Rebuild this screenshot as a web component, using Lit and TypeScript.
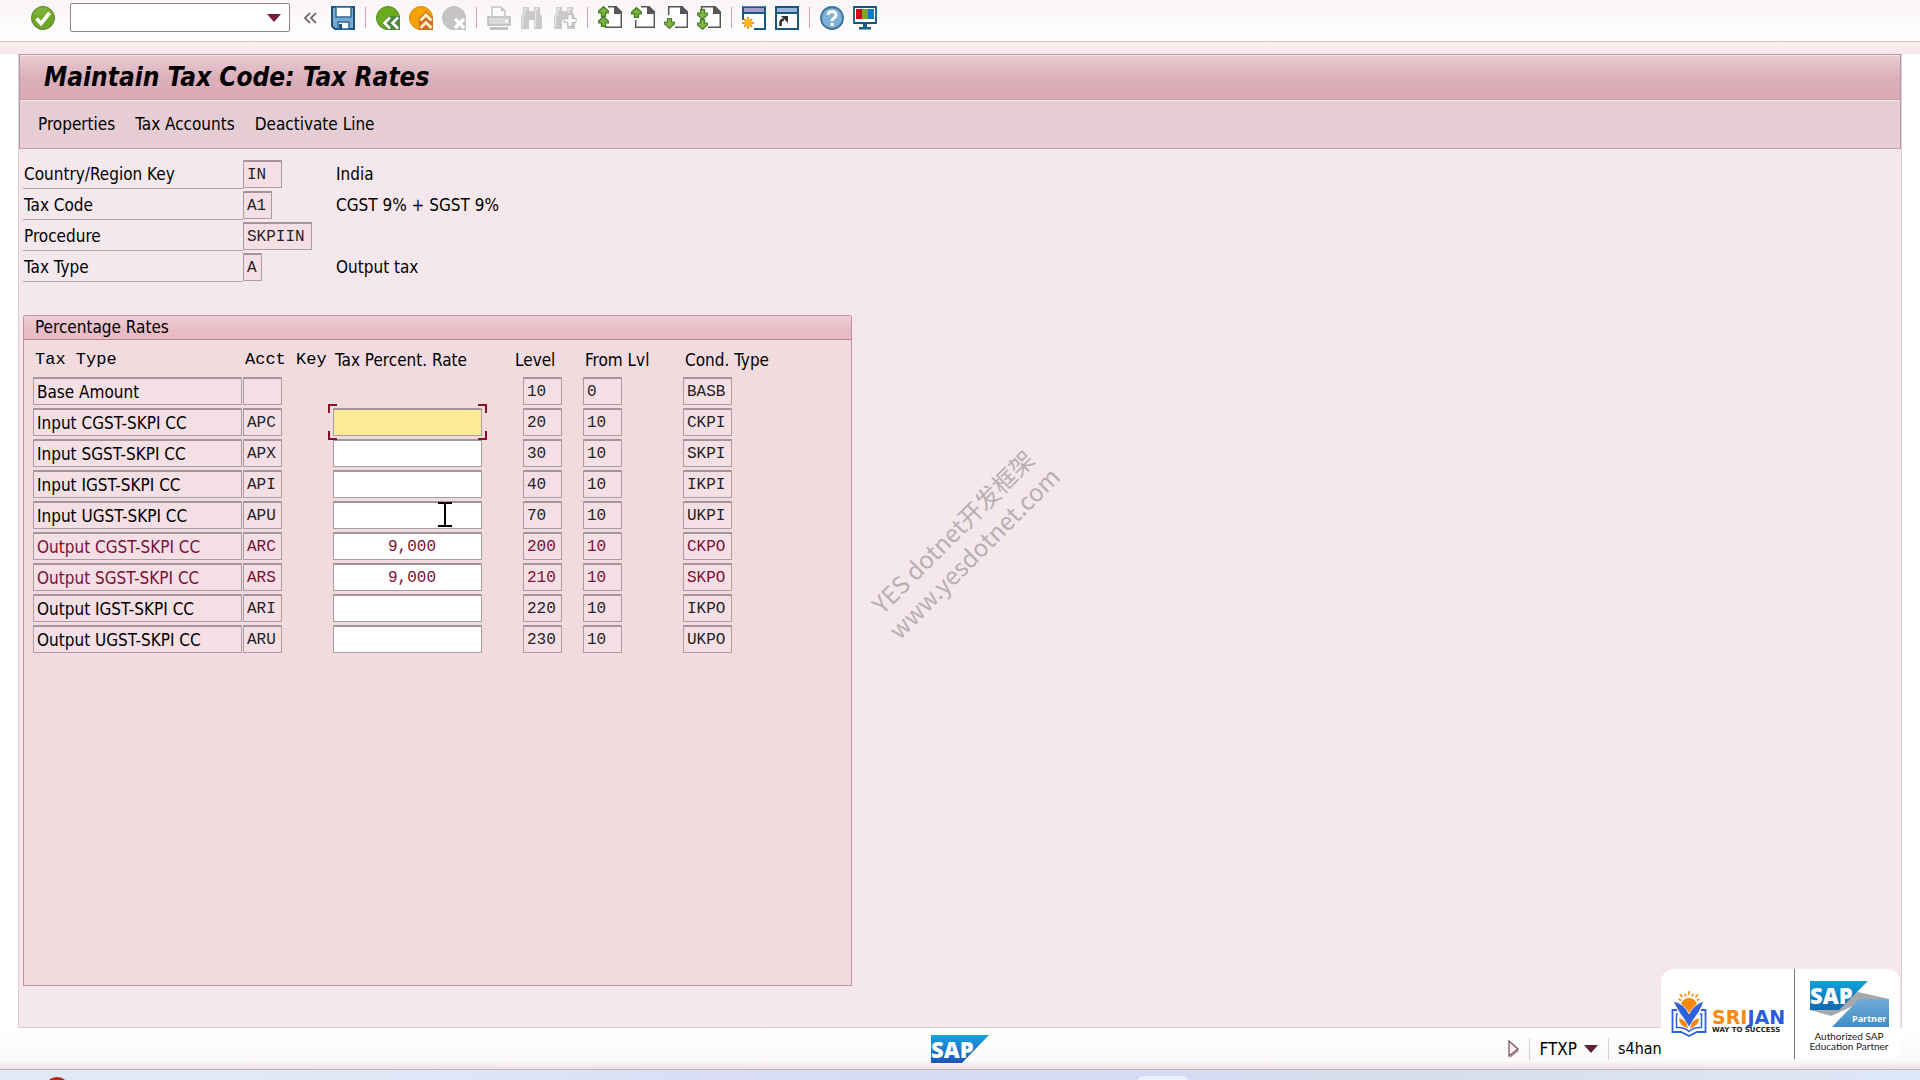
import { LitElement, html, css, svg, nothing } from "lit";
import { customElement, property } from "lit/decorators.js";
import { classMap } from "lit/directives/class-map.js";

interface RateRow {
  type: string;
  key: string;
  rate: string | null;
  level: string;
  from: string;
  cond: string;
  active?: boolean;
  focused?: boolean;
}

const RATES: RateRow[] = [
  { type: "Base Amount", key: "", rate: null, level: "10", from: "0", cond: "BASB" },
  { type: "Input CGST-SKPI CC", key: "APC", rate: "", level: "20", from: "10", cond: "CKPI", focused: true },
  { type: "Input SGST-SKPI CC", key: "APX", rate: "", level: "30", from: "10", cond: "SKPI" },
  { type: "Input IGST-SKPI CC", key: "API", rate: "", level: "40", from: "10", cond: "IKPI" },
  { type: "Input UGST-SKPI CC", key: "APU", rate: "", level: "70", from: "10", cond: "UKPI" },
  { type: "Output CGST-SKPI CC", key: "ARC", rate: "9,000", level: "200", from: "10", cond: "CKPO", active: true },
  { type: "Output SGST-SKPI CC", key: "ARS", rate: "9,000", level: "210", from: "10", cond: "SKPO", active: true },
  { type: "Output IGST-SKPI CC", key: "ARI", rate: "", level: "220", from: "10", cond: "IKPO" },
  { type: "Output UGST-SKPI CC", key: "ARU", rate: "", level: "230", from: "10", cond: "UKPO" },
];

const FIELDS = [
  { id: "country", label: "Country/Region Key", value: "IN", size: "w39", text: "India" },
  { id: "code", label: "Tax Code", value: "A1", size: "w29", text: "CGST 9% + SGST 9%" },
  { id: "procedure", label: "Procedure", value: "SKPIIN", size: "w69", text: "" },
  { id: "type", label: "Tax Type", value: "A", size: "w19", text: "Output tax" },
];

const page = svg`<path d="M9 1H18L23 6V22H5" fill="#fff" stroke="none"/><path d="M16 0H18L24 6V8H16Z" fill="#55565a"/>`;
const up = (x: number, y: number) =>
  svg`<path transform="translate(${x} ${y})" d="M5.500 .7L10.300 5V6.800H7.500V10.300H3.500V6.800H.7V5Z" fill="#7fb23c" stroke="#3f7d22" stroke-width="1.300"/>`;
const down = (x: number, y: number) =>
  svg`<path transform="translate(${x} ${y})" d="M5.500 10.300L10.300 6V4.200H7.500V.7H3.500V4.200H.7V6Z" fill="#86b545" stroke="#4c8128" stroke-width="1.300"/>`;
const tube = svg`<path d="M3 1H9V5H14V1H20V7L22 11V23H14V14H9V23H1V11L3 7Z" fill="#c9c9c9"/><path d="M4.500 2.500V8L2.500 11.500V21.500M15.500 2.500V8L15.500 21.500" stroke="#e4e4e4" fill="none" stroke-width="1.500"/><path d="M6 1.500V4M17 1.500V4" stroke="#fff"/>`;

const ICONS: Record<string, unknown> = {
  ok: svg`<circle cx="12" cy="12" r="11.500" fill="#6fa52b" stroke="#62802f"/><path d="M2 8A11 11 0 0 1 22 8Q14 12 2 8Z" fill="#86b93a" opacity=".6"/><path d="M5.500 12.500L10 17.500L18.500 7" fill="none" stroke="#fff" stroke-width="3.600"/>`,
  save: svg`<path d="M1 1H23V23H4L1 20Z" fill="#7aaad2" stroke="#1f5078" stroke-width="2"/><path d="M5 1H20V11H5Z" fill="#fff" stroke="#2d6a94" stroke-width="1.500"/><path d="M7 16H18V23H7Z" fill="#fff" stroke="#2d6a94" stroke-width="1.500"/><path d="M8 18H11V23H8Z" fill="#1f5078"/>`,
  back: svg`<circle cx="12" cy="12" r="11.500" fill="#6cab1e" stroke="#4f8a2a"/><path d="M6 17L13 10H24V24H12Z" fill="#4d8740"/><path d="M14 11.500L8.500 17L14 22.500M22 11.500L16.500 17L22 22.500" fill="none" stroke="#fff" stroke-width="2.600"/>`,
  exit: svg`<circle cx="12" cy="12" r="11.500" fill="#f5a300" stroke="#dc8414"/><path d="M10 12L17 5.500L24 12V24H10Z" fill="#cf6f1e"/><path d="M11.500 14.500L17 9L22.500 14.500M11.500 22L17 16.500L22.500 22" fill="none" stroke="#fff3cf" stroke-width="2.800"/>`,
  cancel: svg`<circle cx="12" cy="12" r="11.500" fill="#c4c4c4" stroke="#b9b9b9" stroke-dasharray="2 1"/><path d="M11 11H24V24H11Z" fill="#c4c4c4"/><path d="M13 13L22 22M22 13L13 22" stroke="#fff" stroke-width="3.400"/>`,
  print: svg`<path d="M5 10V1H14L18 5V10" fill="#fafafa" stroke="#c4c4c4" stroke-width="1.500"/><path d="M14 1V5H18Z" fill="#c4c4c4"/><rect x="1" y="11" width="22" height="8" fill="#dadada" stroke="#bababa" stroke-width="1.500"/><rect x="18" y="14" width="3" height="2" fill="#fff"/><path d="M3 22.500H21" stroke="#b9b9b9" stroke-width="2.500"/>`,
  find: tube,
  findNext: svg`${tube}<path d="M15 8.500H19V12.500H23V16.500H19V20.500H15V16.500H11V12.500H15Z" fill="#fff" stroke="#b8b8b8"/>`,
  first: svg`${page}<path d="M10 .7H18L23.300 6V21.300H7" fill="none" stroke="#55565a" stroke-width="1.500"/>${up(0, 0)}${up(0, 10)}`,
  prev: svg`${page}<path d="M10 .7H18L23.300 6V21.300H4.700V14" fill="none" stroke="#55565a" stroke-width="1.500"/>${up(0, 1)}`,
  next: svg`${page}<path d="M4.700 9V.7H18L23.300 6V21.300H11" fill="none" stroke="#55565a" stroke-width="1.500"/>${down(0, 12)}`,
  last: svg`${page}<path d="M4.700 5V.7H18L23.300 6V21.300H11" fill="none" stroke="#55565a" stroke-width="1.500"/>${down(0, 3)}${down(0, 13)}`,
  session: svg`<path d="M1 1H23V23H1Z" fill="#fff"/><path d="M1 0H24V6H1Z" fill="#a79ccb"/><path d="M0 0H24V24H12V22H22V8H2V14H0Z M2 2V6H22V2Z" fill="#175a80" fill-rule="evenodd"/><path d="M1 0H23V1H1Z" fill="#5b86b0"/><g stroke="#f39a1c" stroke-width="2"><path d="M6 11V23M0 17H12M2 13L10 21M10 13L2 21"/></g><circle cx="6" cy="17" r="3.600" fill="#fdb515"/>`,
  shortcut: svg`<path d="M1 1H23V23H1Z" fill="#fff" stroke="#1d5678" stroke-width="2"/><path d="M2 2H22V6H2Z" fill="#9ab3dc"/><path d="M1 7H23" stroke="#1d5678" stroke-width="2"/><path d="M5.500 20V17Q5.500 13.500 9 13.500" stroke="#333" stroke-width="2.600" fill="none"/><path d="M6 10H13V17Z" fill="#333"/>`,
  help: svg`<circle cx="12" cy="12" r="11" fill="#7db1d8" stroke="#3f7498" stroke-width="1.800"/><path d="M8 9Q8.200 5.500 12 5.500T16 9Q16 11 13.800 12.200Q12 13.200 12 15.200" fill="none" stroke="#fff" stroke-width="3"/><path d="M10.500 17H13.700V20H10.500Z" fill="#fff"/>`,
  monitor: svg`<path d="M1 1H23V17H1Z" fill="#fff" stroke="#155678" stroke-width="1.800"/><path d="M3 3H9V13H3Z" fill="#c80f14"/><path d="M9 3H15V13H9Z" fill="#7aa926"/><path d="M15 3H21V13H15Z" fill="#0a7cc9"/><path d="M10 17H14V21H18V23.500H6V21H10Z" fill="#1a6288"/>`,
};

@customElement("tool-button")
export class ToolButton extends LitElement {
  @property() icon = "";
  @property() label = "";
  @property({ type: Boolean }) disabled = false;

  static styles = css`
    :host { display: block; flex: none; }
    .tool { display: block; width: 24px; height: 24px; margin: 0; padding: 0; border: 0; background: none; }
    .pic { display: block; width: 24px; height: 24px; }
  `;

  render() {
    return html`<button class="tool" aria-label=${this.label} ?disabled=${this.disabled}>
      <svg class="pic" viewBox="0 0 24 24" aria-hidden="true">${ICONS[this.icon]}</svg>
    </button>`;
  }
}

@customElement("partner-card")
export class PartnerCard extends LitElement {
  static styles = css`
    :host { display: block; }
    .card { display: flex; width: 239px; height: 90px; border-radius: 13px; background: #fff; overflow: hidden; }
    .brand { flex: none; width: 133px; border-right: 1px solid #777; }
    .partner { flex: 1; }
    svg { display: block; }
    .name { font: 700 19px "DejaVu Sans", sans-serif; }
    .motto { font: 700 7px "DejaVu Sans", sans-serif; fill: #222; }
    .sap { font: 800 22px "Open Sans", sans-serif; fill: #fff; }
    .tag { font: 700 9px "Open Sans", sans-serif; fill: #fff; }
    .note { font: 400 10px Lato, sans-serif; fill: #222; }
  `;

  render() {
    const rays = [-80, -60, -40, -20, 0, 20, 40, 60, 80];
    return html`<div class="card">
      <div class="brand">
        <svg width="132" height="90" viewBox="0 0 132 90" role="img" aria-label="Srijan, way to success">
          <g stroke="#f28a12" stroke-width="1.600">
            ${rays.map((a) => svg`<path d="M28 ${a % 40 ? 27 : 26}V${a % 40 ? 24 : 22}" transform="rotate(${a} 28 36)"/>`)}
          </g>
          <circle cx="28" cy="37" r="8" fill="#f7890b"/>
          <path d="M12 32Q24 35 28 45Q32 36 43 32Q39 43 33 50L28 58L23 50Q18 44 12 32Z" fill="#2f62d9" stroke="#fff" stroke-width=".8"/>
          <path d="M16 41H11.500V63H20L28 67L36 63H44.500V41H40" fill="none" stroke="#2f62d9" stroke-width="1.800"/>
          <path d="M17 45H15.500V58.500Q24 58 28 62.500Q32 58 40.500 58.500V45H39" fill="none" stroke="#2f62d9" stroke-width="1.500"/>
          <path d="M27 59Q18 57 18 49Q26 51 27 59ZM29 59Q38 57 38 49Q30 51 29 59Z" fill="#f28a12"/>
          <text class="name" x="51" y="55"><tspan fill="#f28a12">SRI</tspan><tspan fill="#2a5bdb">JAN</tspan></text>
          <text class="motto" x="51" y="63">WAY TO SUCCESS</text>
        </svg>
      </div>
      <div class="partner">
        <svg width="105" height="90" viewBox="0 0 105 90" role="img" aria-label="SAP Partner">
          <defs>
            <linearGradient id="a" x1="0" y1="0" x2="0" y2="1"><stop offset="0" stop-color="#12a0dc"/><stop offset="1" stop-color="#1268ae"/></linearGradient>
            <linearGradient id="b" x1="0" y1="0" x2="0" y2="1"><stop offset="0" stop-color="#74a9d8"/><stop offset="1" stop-color="#3d8fc2"/></linearGradient>
          </defs>
          <path d="M63 23L94 30L60 36L36 47L15 41Z" fill="#a6a8ab"/>
          <path d="M15 12H73L44 41H15Z" fill="url(#a)"/>
          <path d="M64 30H94V58H37Z" fill="url(#b)"/>
          <text class="sap" x="15" y="35">SAP</text>
          <text class="tag" x="57" y="53">Partner</text>
          <text class="note" x="54" y="71" text-anchor="middle">Authorized SAP</text>
          <text class="note" x="54" y="81" text-anchor="middle">Education Partner</text>
        </svg>
      </div>
    </div>`;
  }
}

@customElement("app-root")
export class AppRoot extends LitElement {
  static styles = css`
    :host {
      --ui: "DejaVu Sans Condensed", "Noto Sans", sans-serif;
      display: flex;
      flex-direction: column;
      position: relative;
      min-height: 100vh;
      overflow: hidden;
      box-sizing: border-box;
      background: #fff;
      color: #000;
      font: 17px/28px var(--ui);
    }
    * { box-sizing: border-box; }
    button, input { font: inherit; color: inherit; margin: 0; }

    .bar { display: flex; align-items: center; gap: 9px; height: 42px; padding: 0 31px 6px; border-bottom: 1px solid #cdc3c6; background: linear-gradient(#faf5f6, #fff); }
    .command { display: flex; align-items: center; width: 220px; height: 29px; margin: 0 4px 0 6px; border: 1px solid #8d8286; border-radius: 2px; background: #fff; }
    .command input { flex: 1; min-width: 0; height: 100%; padding: 0 4px; border: 0; outline: 0; background: none; }
    .command button, .fold { padding: 0; border: 0; background: none; }
    .command svg { display: block; width: 14px; height: 8px; margin-right: 8px; }
    .fold { width: 14px; height: 14px; margin-right: 5px; }
    .fold svg { display: block; }
    .sep { flex: none; width: 1px; height: 21px; margin: 0 1px; background: #d9a4b0; }

    .stage { flex: 1; display: flex; flex-direction: column; padding: 12px 18px 0; background: linear-gradient(#faf0f0, #f6e6e9 12px, #fff 12px, #fff); }
    .window { flex: 1; display: flex; flex-direction: column; border: 1px solid #dccdd2; border-top: 0; background: #f4e8ec; }
    .head { border: 1px solid #b59ba4; border-bottom-color: #bba7ae; background: #e5cdd3; }
    .title { margin: 0; padding: 0 24px; height: 45px; border-top: 1px solid #f3e2e6; border-bottom: 1px solid #c49aa5; background: linear-gradient(#e9ccd3, #dbb0bb 50%, #daa9b4); font: italic 700 26px/42px var(--ui); }
    .actions { display: flex; gap: 20px; padding: 9px 18px 10px; border-top: 1px solid #f6eaed; }
    .actions button { padding: 0; border: 0; background: none; }

    .fields { display: grid; gap: 3px; padding: 11px 4px 0; }
    .field { display: grid; grid-template-columns: 220px 93px 1fr; height: 28px; }
    .field label { padding-left: 1px; border-bottom: 1px solid #b3a5aa; }

    .box { display: block; height: 28px; padding: 0 3px; border: 1px solid #a89da1; border-top: 2px solid #a39599; border-radius: 1px; outline: 0; background: #f4dfe5; color: #262226; font: 16px/25px "Liberation Mono", monospace; }
    .plain { color: #000; font: 17px/25px var(--ui); }
    .w19 { width: 19px; }
    .w29 { width: 29px; }
    .w39 { width: 39px; }
    .w49 { width: 49px; }
    .w69 { width: 69px; }
    .w209 { width: 209px; }
    .rate { width: 149px; padding-right: 45px; background: #fff; text-align: right; }
    .rate.focused { background: #fbea98; }
    .active .box { color: #7a0f38; }

    .group { flex: 1; display: flex; flex-direction: column; width: 44%; min-width: 829px; margin: 34px 4px 41px; border: 1px solid #c4919c; border-bottom-color: #b49aa1; border-radius: 3px 3px 0 0; background: #f1dbdf; }
    .caption { margin: 0; padding-left: 11px; height: 24px; border-bottom: 1px solid #b97f8b; background: linear-gradient(#ecd0d7, #e8bcc7 60%); font: 17px/23px var(--ui); }
    .rates { width: 820px; margin-left: 9px; border-collapse: collapse; table-layout: fixed; }
    .rates th { height: 37px; padding: 2px 0 0 2px; font-weight: 400; text-align: left; white-space: nowrap; }
    .rates th.mono { font: 17px/28px "Liberation Mono", monospace; }
    .rates td { height: 31px; padding: 0 0 3px; }
    .c1 { width: 210px; }
    .c2 { width: 90px; }
    .c3 { width: 180px; }
    .c4 { width: 70px; }
    .c5 { width: 100px; }
    .rates td.inset { padding-left: 10px; }
    .slot { position: relative; width: 149px; }
    .marker { position: absolute; top: -4px; left: -5px; width: 159px; height: 36px; pointer-events: none; z-index: 1; }

    .status { display: grid; grid-template-columns: minmax(0, 1fr) 58px minmax(0, 1fr); align-items: center; height: 42px; border-bottom: 1px solid #c6b3ba; background: linear-gradient(#fff, #fbf9fb 80%, #eee0e5); }
    .logo { display: block; grid-column: 2; }
    .logo text { font: 800 22px "Open Sans", sans-serif; fill: #fff; }
    .info { display: flex; align-items: center; justify-content: flex-end; gap: 9px; padding-right: 259px; }
    .info svg { flex: none; display: block; }
    .info i { flex: none; width: 1px; height: 22px; background: #d8cdd1; }
    .tcode { display: flex; align-items: center; gap: 7px; padding: 0 1px 0 0; border: 0; background: none; line-height: 28px; }
    .host { width: 43px; font-size: 16px; white-space: nowrap; }
    .taskbar { height: 10px; background: linear-gradient(90deg, #e0eaf6, #e0e8f8 20%, #d9dcf5 40%, #d6daf4 62%, #d6dde8 72%, #dde8f8); overflow: hidden; }
    .taskbar svg { display: block; width: 100%; height: 10px; }

    .badge { position: absolute; right: 20px; bottom: 21px; }
    .mark { position: absolute; left: 963px; top: 542px; transform: translate(-50%, -50%) rotate(-45deg); color: #b9afb2; font: 24px/30px "Noto Sans CJK SC", sans-serif; text-align: center; white-space: nowrap; pointer-events: none; }
    .cursor { position: absolute; left: 438px; top: 502px; }
  `;

  private cell(label: string, value: string, cls: string) {
    return html`<input class="box ${cls}" readonly aria-label=${label} .value=${value} />`;
  }

  private rateCell(row: RateRow) {
    if (row.rate === null) return nothing;
    return html`<div class="slot">
      <input class=${classMap({ box: true, rate: true, focused: !!row.focused })} aria-label="Tax Percent. Rate ${row.type}" .value=${row.rate} />
      ${row.focused
        ? html`<svg class="marker" viewBox="0 0 159 36" aria-hidden="true">
            <path d="M1 9V1H9M150 1H158V9M158 27V35H150M9 35H1V27" fill="none" stroke="#8c0d26" stroke-width="2" />
          </svg>`
        : nothing}
    </div>`;
  }

  private tools(items: [string, string, boolean?][]) {
    return items.map(
      ([icon, label, off]) => html`<tool-button icon=${icon} label=${label} ?disabled=${!!off}></tool-button>`
    );
  }

  render() {
    const sep = html`<span class="sep"></span>`;
    return html`
      <header class="bar">
        ${this.tools([["ok", "Enter"]])}
        <div class="command">
          <input aria-label="Command" />
          <button aria-label="Command history">
            <svg viewBox="0 0 14 8" aria-hidden="true"><path d="M0 0H14L7 8Z" fill="#7b1d36" /></svg>
          </button>
        </div>
        <button class="fold" aria-label="Hide command field">
          <svg width="14" height="14" viewBox="0 0 14 14" aria-hidden="true"><path d="M7 2L2 7L7 12M13 2L8 7L13 12" fill="none" stroke="#5a5356" stroke-width="1.600" /></svg>
        </button>
        ${this.tools([["save", "Save"]])} ${sep}
        ${this.tools([["back", "Back"], ["exit", "Exit"], ["cancel", "Cancel", true]])} ${sep}
        ${this.tools([["print", "Print", true], ["find", "Find", true], ["findNext", "Find next", true]])} ${sep}
        ${this.tools([["first", "First page"], ["prev", "Previous page"], ["next", "Next page"], ["last", "Last page"]])} ${sep}
        ${this.tools([["session", "New session"], ["shortcut", "Create shortcut"]])} ${sep}
        ${this.tools([["help", "Help"], ["monitor", "Customize local layout"]])}
      </header>

      <main class="stage">
        <div class="window">
          <div class="head">
            <h1 class="title">Maintain Tax Code: Tax Rates</h1>
            <nav class="actions">
              <button>Properties</button>
              <button>Tax Accounts</button>
              <button>Deactivate Line</button>
            </nav>
          </div>

          <div class="fields">
            ${FIELDS.map(
              (f) => html`<div class="field">
                <label for=${f.id}>${f.label}</label>
                <input id=${f.id} class="box ${f.size}" readonly .value=${f.value} />
                <span>${f.text}</span>
              </div>`
            )}
          </div>

          <section class="group">
            <h2 class="caption">Percentage Rates</h2>
            <table class="rates">
              <colgroup>
                <col class="c1" /><col class="c2" /><col class="c3" /><col class="c4" /><col class="c5" /><col />
              </colgroup>
              <thead>
                <tr>
                  <th class="mono">Tax Type</th>
                  <th class="mono">Acct Key</th>
                  <th>Tax Percent. Rate</th>
                  <th>Level</th>
                  <th>From Lvl</th>
                  <th>Cond. Type</th>
                </tr>
              </thead>
              <tbody>
                ${RATES.map(
                  (r) => html`<tr class=${classMap({ active: !!r.active })}>
                    <td>${this.cell("Tax Type", r.type, "plain w209")}</td>
                    <td>${this.cell("Acct Key", r.key, "w39")}</td>
                    <td>${this.rateCell(r)}</td>
                    <td class="inset">${this.cell("Level", r.level, "w39")}</td>
                    <td>${this.cell("From Lvl", r.from, "w39")}</td>
                    <td>${this.cell("Cond. Type", r.cond, "w49")}</td>
                  </tr>`
                )}
              </tbody>
            </table>
          </section>
        </div>
      </main>

      <footer class="status">
        <svg class="logo" width="58" height="28" viewBox="0 0 58 28" role="img" aria-label="SAP">
          <defs>
            <linearGradient id="s" x1="0" y1="0" x2="0" y2="1"><stop offset="0" stop-color="#14a4e4" /><stop offset="1" stop-color="#1d55b4" /></linearGradient>
          </defs>
          <path d="M0 0H58L31 28H0Z" fill="url(#s)" />
          <text x="0" y="23">SAP</text>
        </svg>
        <div class="info">
          <svg width="12" height="18" viewBox="0 0 12 18" aria-hidden="true">
            <path d="M2 2L11 11L2 18Z" fill="#b79aa4" /><path d="M1 1L10 9L1 16Z" fill="#fbeef1" stroke="#80566a" stroke-width="1.300" />
          </svg>
          <i></i>
          <button class="tcode">
            FTXP
            <svg width="14" height="8" viewBox="0 0 14 8" aria-hidden="true"><path d="M0 0H14L7 8Z" fill="#5e1f33" /></svg>
          </button>
          <i></i>
          <span class="host">s4han</span>
        </div>
      </footer>
      <div class="taskbar">
        <svg aria-hidden="true">
          <ellipse cx="57" cy="13" rx="9" ry="6" fill="#b3261c" />
          <rect x="1138" y="6" width="50" height="12" rx="5" fill="#e9f0fb" />
        </svg>
      </div>

      <partner-card class="badge"></partner-card>
      <div class="mark">YES dotnet开发框架<br />www.yesdotnet.com</div>
      <svg class="cursor" width="14" height="25" viewBox="0 0 14 25" aria-hidden="true">
        <path d="M0 1H5.500L7 2L8.500 1H14M0 24H5.500L7 23L8.500 24H14M7 2V23" fill="none" stroke="#000" stroke-width="2" />
      </svg>
    `;
  }
}
